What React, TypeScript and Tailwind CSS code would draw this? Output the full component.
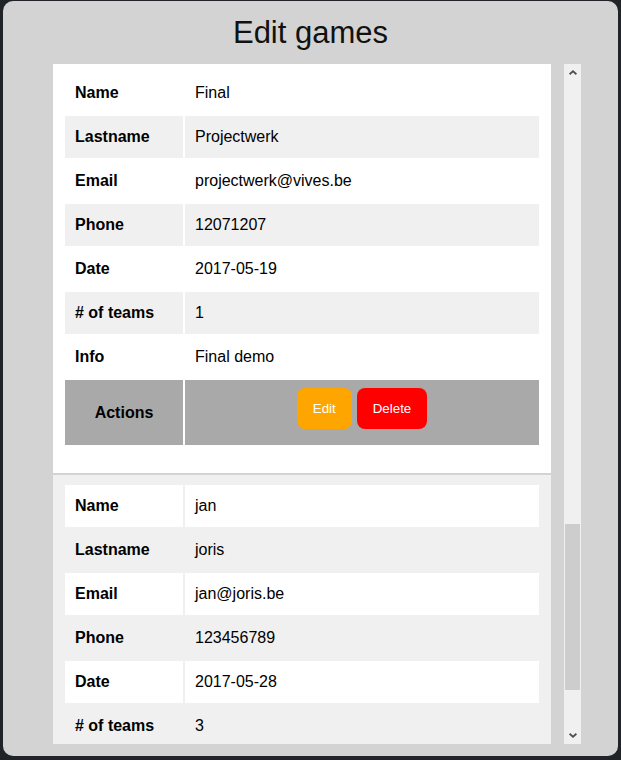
import { useLayoutEffect, useRef, useState } from "react";

interface Game {
  name: string;
  lastname: string;
  email: string;
  phone: string;
  date: string;
  teams: number;
  info: string;
}

const games: Game[] = [
  { name: "Tom", lastname: "Peeters", email: "tom@peeters.be", phone: "0475123456", date: "2017-04-02", teams: 4, info: "Verjaardagsfeest" },
  { name: "Sarah", lastname: "Janssens", email: "sarah.janssens@gmail.com", phone: "0498765432", date: "2017-04-15", teams: 2, info: "Teambuilding" },
  { name: "Pieter", lastname: "Maes", email: "pieter@maes.be", phone: "050123456", date: "2017-05-01", teams: 6, info: "Vrijgezellenfeest" },
  { name: "Test", lastname: "Game", email: "test@vives.be", phone: "12345", date: "2017-05-12", teams: 2, info: "Test" },
  { name: "Final", lastname: "Projectwerk", email: "projectwerk@vives.be", phone: "12071207", date: "2017-05-19", teams: 1, info: "Final demo" },
  { name: "jan", lastname: "joris", email: "jan@joris.be", phone: "123456789", date: "2017-05-28", teams: 3, info: "" },
];

function GameCard({ game, index, cardRef }: { game: Game; index: number; cardRef?: React.Ref<HTMLDivElement> }) {
  const rows: [string, string | number][] = [
    ["Name", game.name],
    ["Lastname", game.lastname],
    ["Email", game.email],
    ["Phone", game.phone],
    ["Date", game.date],
    ["# of teams", game.teams],
    ["Info", game.info],
  ];

  return (
    <div
      ref={cardRef}
      className={
        "w-[498px] border-t-2 border-[#d3d3d3] px-[10px] pt-2 pb-[26px] " +
        (index % 2 === 0 ? "bg-white" : "bg-[#f0f0f0]")
      }
    >
      <table className="w-full table-fixed border-separate border-spacing-[2px]">
        <tbody>
          {rows.map(([label, value], i) => (
            <tr key={label} className={i % 2 === 0 ? "bg-white" : "bg-[#f0f0f0]"}>
              <th className="h-[42px] w-[118px] px-[10px] py-0 text-left font-bold">{label}</th>
              <td className="h-[42px] px-[10px] py-0">{value}</td>
            </tr>
          ))}
          <tr className="bg-[#a9a9a9]">
            <th className="h-[65px] w-[118px] px-[10px] py-0 text-center font-bold">Actions</th>
            <td className="h-[65px] px-[10px] pt-2 pb-0 align-top text-center">
              <div className="flex justify-center gap-[5px]">
                <button className="h-[41px] rounded-[8px] bg-[#ffa500] px-4 text-[13.33px] text-white">Edit</button>
                <button className="h-[41px] rounded-[8px] bg-[#ff0000] px-4 text-[13.33px] text-white">Delete</button>
              </div>
            </td>
          </tr>
        </tbody>
      </table>
    </div>
  );
}

function Chevron({ down }: { down?: boolean }) {
  return (
    <svg width="8" height="5" viewBox="0 0 8 5" className={down ? "rotate-180" : ""}>
      <polygon points="0,3.6 4,0 8,3.6 6.8,5 4,2.4 1.2,5" fill="#505050" />
    </svg>
  );
}

export default function App() {
  const listRef = useRef<HTMLDivElement>(null);
  const finalRef = useRef<HTMLDivElement>(null);
  const [thumb, setThumb] = useState({ top: 443, height: 166 });

  useLayoutEffect(() => {
    const list = listRef.current;
    if (list && finalRef.current) {
      list.scrollTop = finalRef.current.offsetTop + 4;
      const track = list.clientHeight - 34;
      const height = Math.max(20, Math.round((track * list.clientHeight) / list.scrollHeight));
      const max = list.scrollHeight - list.clientHeight;
      const top = max > 0 ? Math.round(((track - height) * list.scrollTop) / max) : 0;
      setThumb({ top, height });
    }
  }, []);

  return (
    <div className="h-[760px] bg-[#202328] px-[3px] pt-[1px] font-['Liberation_Sans',Arial,sans-serif] text-black">
      <div className="flex h-[755px] flex-col rounded-[10px] bg-[#d3d3d3]">
        <h1 className="mt-[14px] mb-[13px] text-center text-[31px] leading-[36px] text-[#111]">Edit games</h1>
        <div className="ml-[50px] flex h-[680px] w-[528px]">
          <div ref={listRef} className="relative h-[680px] w-[511px] overflow-y-auto">
            <div className="pt-[158px] pb-[10px]">
              {games.map((g, i) => (
                <GameCard key={i} game={g} index={i} cardRef={g.name === "Final" ? finalRef : undefined} />
              ))}
            </div>
          </div>
          <div className="flex w-[17px] flex-col bg-[#f0f0f0]">
            <div className="flex h-[17px] items-center justify-center">
              <Chevron />
            </div>
            <div className="flex-1">
              <div
                className="mx-[1px] bg-[#cdcdcd]"
                style={{ marginTop: thumb.top, height: thumb.height }}
              />
            </div>
            <div className="flex h-[17px] items-center justify-center">
              <Chevron down />
            </div>
          </div>
        </div>
      </div>
    </div>
  );
}
